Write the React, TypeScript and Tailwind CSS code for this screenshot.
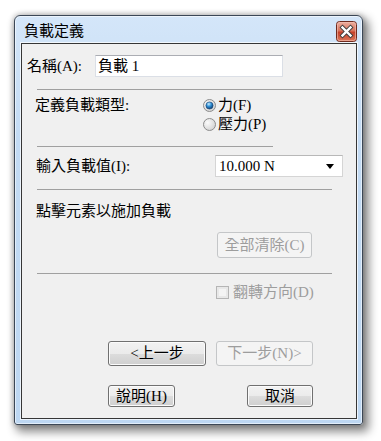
import type { FC, ReactNode } from 'react';
import { useId } from 'react';

const textFont = "font-['Liberation_Serif','Noto_Sans_CJK_TC',serif]";

const Separator: FC<{ width: string }> = ({ width }) => (
  <div className={`ml-[15px] h-px bg-[#a0a0a0] ${width}`} />
);

/** Win7 style push button. */
const Button: FC<{ className: string; disabled?: boolean; children: ReactNode }> = ({ className, disabled, children }) => (
  <div
    className={
      disabled
        ? `flex items-center justify-center rounded-[3px] border border-[#c4c6c8] bg-[#f4f4f4] text-[#9d9d9d] ${className}`
        : `flex items-center justify-center rounded-[3px] border border-[#707070] bg-[linear-gradient(180deg,#f2f2f2_0%,#ebebeb_50%,#dddddd_50%,#cfcfcf_100%)] text-black shadow-[inset_0_0_0_1px_#fbfbfb] ${className}`
    }
  >
    {children}
  </div>
);

const Radio: FC<{ checked?: boolean }> = ({ checked }) => {
  const id = useId().replace(/:/g, '');
  return (
    <svg width="13" height="13" viewBox="0 0 13 13" className="shrink-0">
      <defs>
        <radialGradient id={`off${id}`} cx="0.35" cy="0.35" r="0.75">
          <stop offset="0" stopColor="#fbfbfb" />
          <stop offset="1" stopColor="#d0d0d0" />
        </radialGradient>
        <radialGradient id={`dot${id}`} cx="0.4" cy="0.3" r="0.75">
          <stop offset="0" stopColor="#c9efff" />
          <stop offset="0.45" stopColor="#2f8fd6" />
          <stop offset="1" stopColor="#0c3563" />
        </radialGradient>
      </defs>
      <circle cx="6.5" cy="6.5" r="6" fill={`url(#off${id})`} stroke="#8c8c8c" />
      {checked && <circle cx="6.5" cy="6.5" r="3.6" fill={`url(#dot${id})`} stroke="#1a4577" strokeWidth="0.6" />}
    </svg>
  );
};

const CloseButton: FC = () => (
  <svg width="21" height="21" viewBox="0 0 21 21">
    <defs>
      <linearGradient id="closeBg" x1="0" y1="0" x2="0" y2="1">
        <stop offset="0" stopColor="#eeb2a4" />
        <stop offset="0.45" stopColor="#d8735c" />
        <stop offset="0.55" stopColor="#c5412a" />
        <stop offset="1" stopColor="#dc7a5c" />
      </linearGradient>
    </defs>
    <rect x="0.5" y="0.5" width="20" height="20" rx="3" fill="url(#closeBg)" stroke="#6f2a1e" />
    <rect x="1.5" y="1.5" width="18" height="18" rx="2" fill="none" stroke="#f3c2b4" strokeOpacity="0.6" />
    <path d="M6.5 6.5 L14.5 14.5 M14.5 6.5 L6.5 14.5" stroke="#3d3d3d" strokeWidth="4.2" strokeLinecap="square" />
    <path d="M6.5 6.5 L14.5 14.5 M14.5 6.5 L6.5 14.5" stroke="#ffffff" strokeWidth="2.4" strokeLinecap="square" />
  </svg>
);

const App: FC = () => (
  <div className={`min-h-[441px] bg-white pl-[14px] pt-[15px] text-[15px] text-black ${textFont}`}>
    <div className="flex h-[410px] w-[349px] flex-col rounded-t-[6px] rounded-b-[3px] border border-[#3b4756] bg-[linear-gradient(180deg,#d4e6f9_0%,#c3dbf4_30%,#bdd7f2_100%)] shadow-[0_0_5px_1px_rgba(0,0,0,0.2),4px_5px_10px_2px_rgba(0,0,0,0.45),inset_0_0_0_1px_rgba(255,255,255,0.55)]">
      <div className="flex h-[27px] items-start justify-between pl-[9px] pr-[5px] pt-[5px]">
        <div className="flex h-[21px] items-center leading-none">負載定義</div>
        <CloseButton />
      </div>

      <div className="ml-[6px] flex h-[376px] w-[336px] flex-col border border-[#363636] bg-[#f0f0f0] shadow-[0_0_0_1px_rgba(255,255,255,0.7)]">
        <div className="mt-[11px] flex h-[22px] items-center">
          <span className="ml-[5px] w-[68px] leading-none">名稱(A):</span>
          <div className="flex h-[22px] w-[188px] items-center border border-[#dbdfe6] border-t-[#abadb3] bg-white pl-[2px] leading-none">
            負載 1
          </div>
        </div>

        <div className="mt-[12px]">
          <Separator width="w-[295px]" />
        </div>

        <div className="mt-[6px] flex">
          <div className="ml-[13px] flex h-[19px] w-[168px] items-center leading-none">定義負載類型:</div>
          <div className="flex flex-col">
            <div className="flex h-[19px] items-center gap-[2px] leading-none">
              <Radio checked />
              <span>力(F)</span>
            </div>
            <div className="flex h-[19px] items-center gap-[2px] leading-none">
              <Radio />
              <span>壓力(P)</span>
            </div>
          </div>
        </div>

        <div className="mt-[12px]">
          <Separator width="w-[236px]" />
        </div>

        <div className="mt-[8px] flex h-[22px] items-center">
          <span className="ml-[14px] w-[179px] leading-none">輸入負載值(I):</span>
          <div className="flex h-[22px] w-[128px] items-center justify-between border border-[#d5d5d5] border-t-[#b8b8b8] bg-white pl-[3px] pr-[8px] leading-none">
            <span>10.000 N</span>
            <svg width="8" height="5" viewBox="0 0 8 5">
              <path d="M0 0 H8 L4 5 Z" fill="#000" />
            </svg>
          </div>
        </div>

        <div className="mt-[12px]">
          <Separator width="w-[295px]" />
        </div>

        <div className="ml-[14px] mt-[11px] flex h-[20px] items-center leading-none">點擊元素以施加負載</div>

        <div className="mt-[11px] flex">
          <Button className="ml-[195px] h-[26px] w-[95px]" disabled>
            全部清除(C)
          </Button>
        </div>

        <div className="mt-[15px]">
          <Separator width="w-[295px]" />
        </div>

        <div className="ml-[194px] mt-[12px] flex h-[13px] items-center gap-[4px] leading-none text-[#9d9d9d]">
          <div className="h-[13px] w-[13px] shrink-0 border border-[#b5b5b5] bg-[#f4f4f4] shadow-[inset_0_0_0_2px_#e8e8e8]" />
          <span>翻轉方向(D)</span>
        </div>

        <div className="mt-[42px] flex">
          <Button className="ml-[86px] h-[25px] w-[98px]">&lt;上一步</Button>
          <Button className="ml-[10px] h-[25px] w-[97px]" disabled>
            下一步(N)&gt;
          </Button>
        </div>

        <div className="mt-[19px] flex">
          <Button className="ml-[86px] h-[22px] w-[67px]">說明(H)</Button>
          <Button className="ml-[72px] h-[22px] w-[66px]">取消</Button>
        </div>
      </div>
    </div>
  </div>
);

export default App;
